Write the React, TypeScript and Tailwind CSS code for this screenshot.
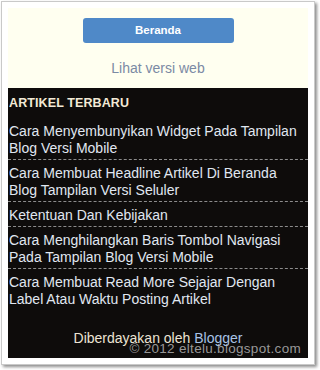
const articles = [
  'Cara Menyembunyikan Widget Pada Tampilan Blog Versi Mobile',
  'Cara Membuat Headline Artikel Di Beranda Blog Tampilan Versi Seluler',
  'Ketentuan Dan Kebijakan',
  'Cara Menghilangkan Baris Tombol Navigasi Pada Tampilan Blog Versi Mobile',
  'Cara Membuat Read More Sejajar Dengan Label Atau Waktu Posting Artikel',
]

export default function App() {
  return (
    <div className="w-[320px] h-[370px] bg-white pt-px pl-px font-['Liberation_Sans',Arial,sans-serif]">
      {/* framed screenshot */}
      <div className="w-[314px] h-[364px] border border-[#c9c9c9] bg-white p-[6px] shadow-[2px_2px_3px_rgba(0,0,0,0.45)]">
        <div className="relative w-[300px] h-[350px] flex flex-col">
          {/* top nav */}
          <div className="bg-[#fffff0] h-[80px] flex flex-col items-center pt-[10px]">
            <button className="w-[151px] h-[25px] rounded-[3px] bg-[#4f89c8] text-white text-[11.5px] font-bold leading-[25px]">
              Beranda
            </button>
            <a className="mt-[17px] text-[14px] leading-[17px] text-[#7b8aa4]">Lihat versi web</a>
          </div>

          {/* widget */}
          <div className="flex-1 bg-[#0e0c0b] flex flex-col">
            <h2 className="h-[30px] flex items-center pl-px text-[12.5px] font-bold text-[#f3ead6] tracking-[0.1px]">
              ARTIKEL TERBARU
            </h2>
            <ul>
              {articles.map((title, i) => (
                <li
                  key={title}
                  className={`pl-px pr-2 pt-[5px] pb-[2px] text-[14px] leading-[17px] text-[#e0e7f1] ${
                    i < articles.length - 1 ? 'border-b border-dashed border-[#8c8c8c]' : ''
                  }`}
                >
                  {title}
                </li>
              ))}
            </ul>
            <p className="mt-[20px] text-center text-[14px] leading-[17px] text-[#ece4d4]">
              Diberdayakan oleh <span className="text-[#a8c3e6]">Blogger</span>
            </p>
          </div>

          {/* watermark */}
          <span className="absolute right-[7px] bottom-[1px] text-[13.5px] leading-[16px] tracking-[0.3px] text-[#bdbdbd]/80">
            © 2012 eltelu.blogspot.com
          </span>
        </div>
      </div>
    </div>
  )
}
